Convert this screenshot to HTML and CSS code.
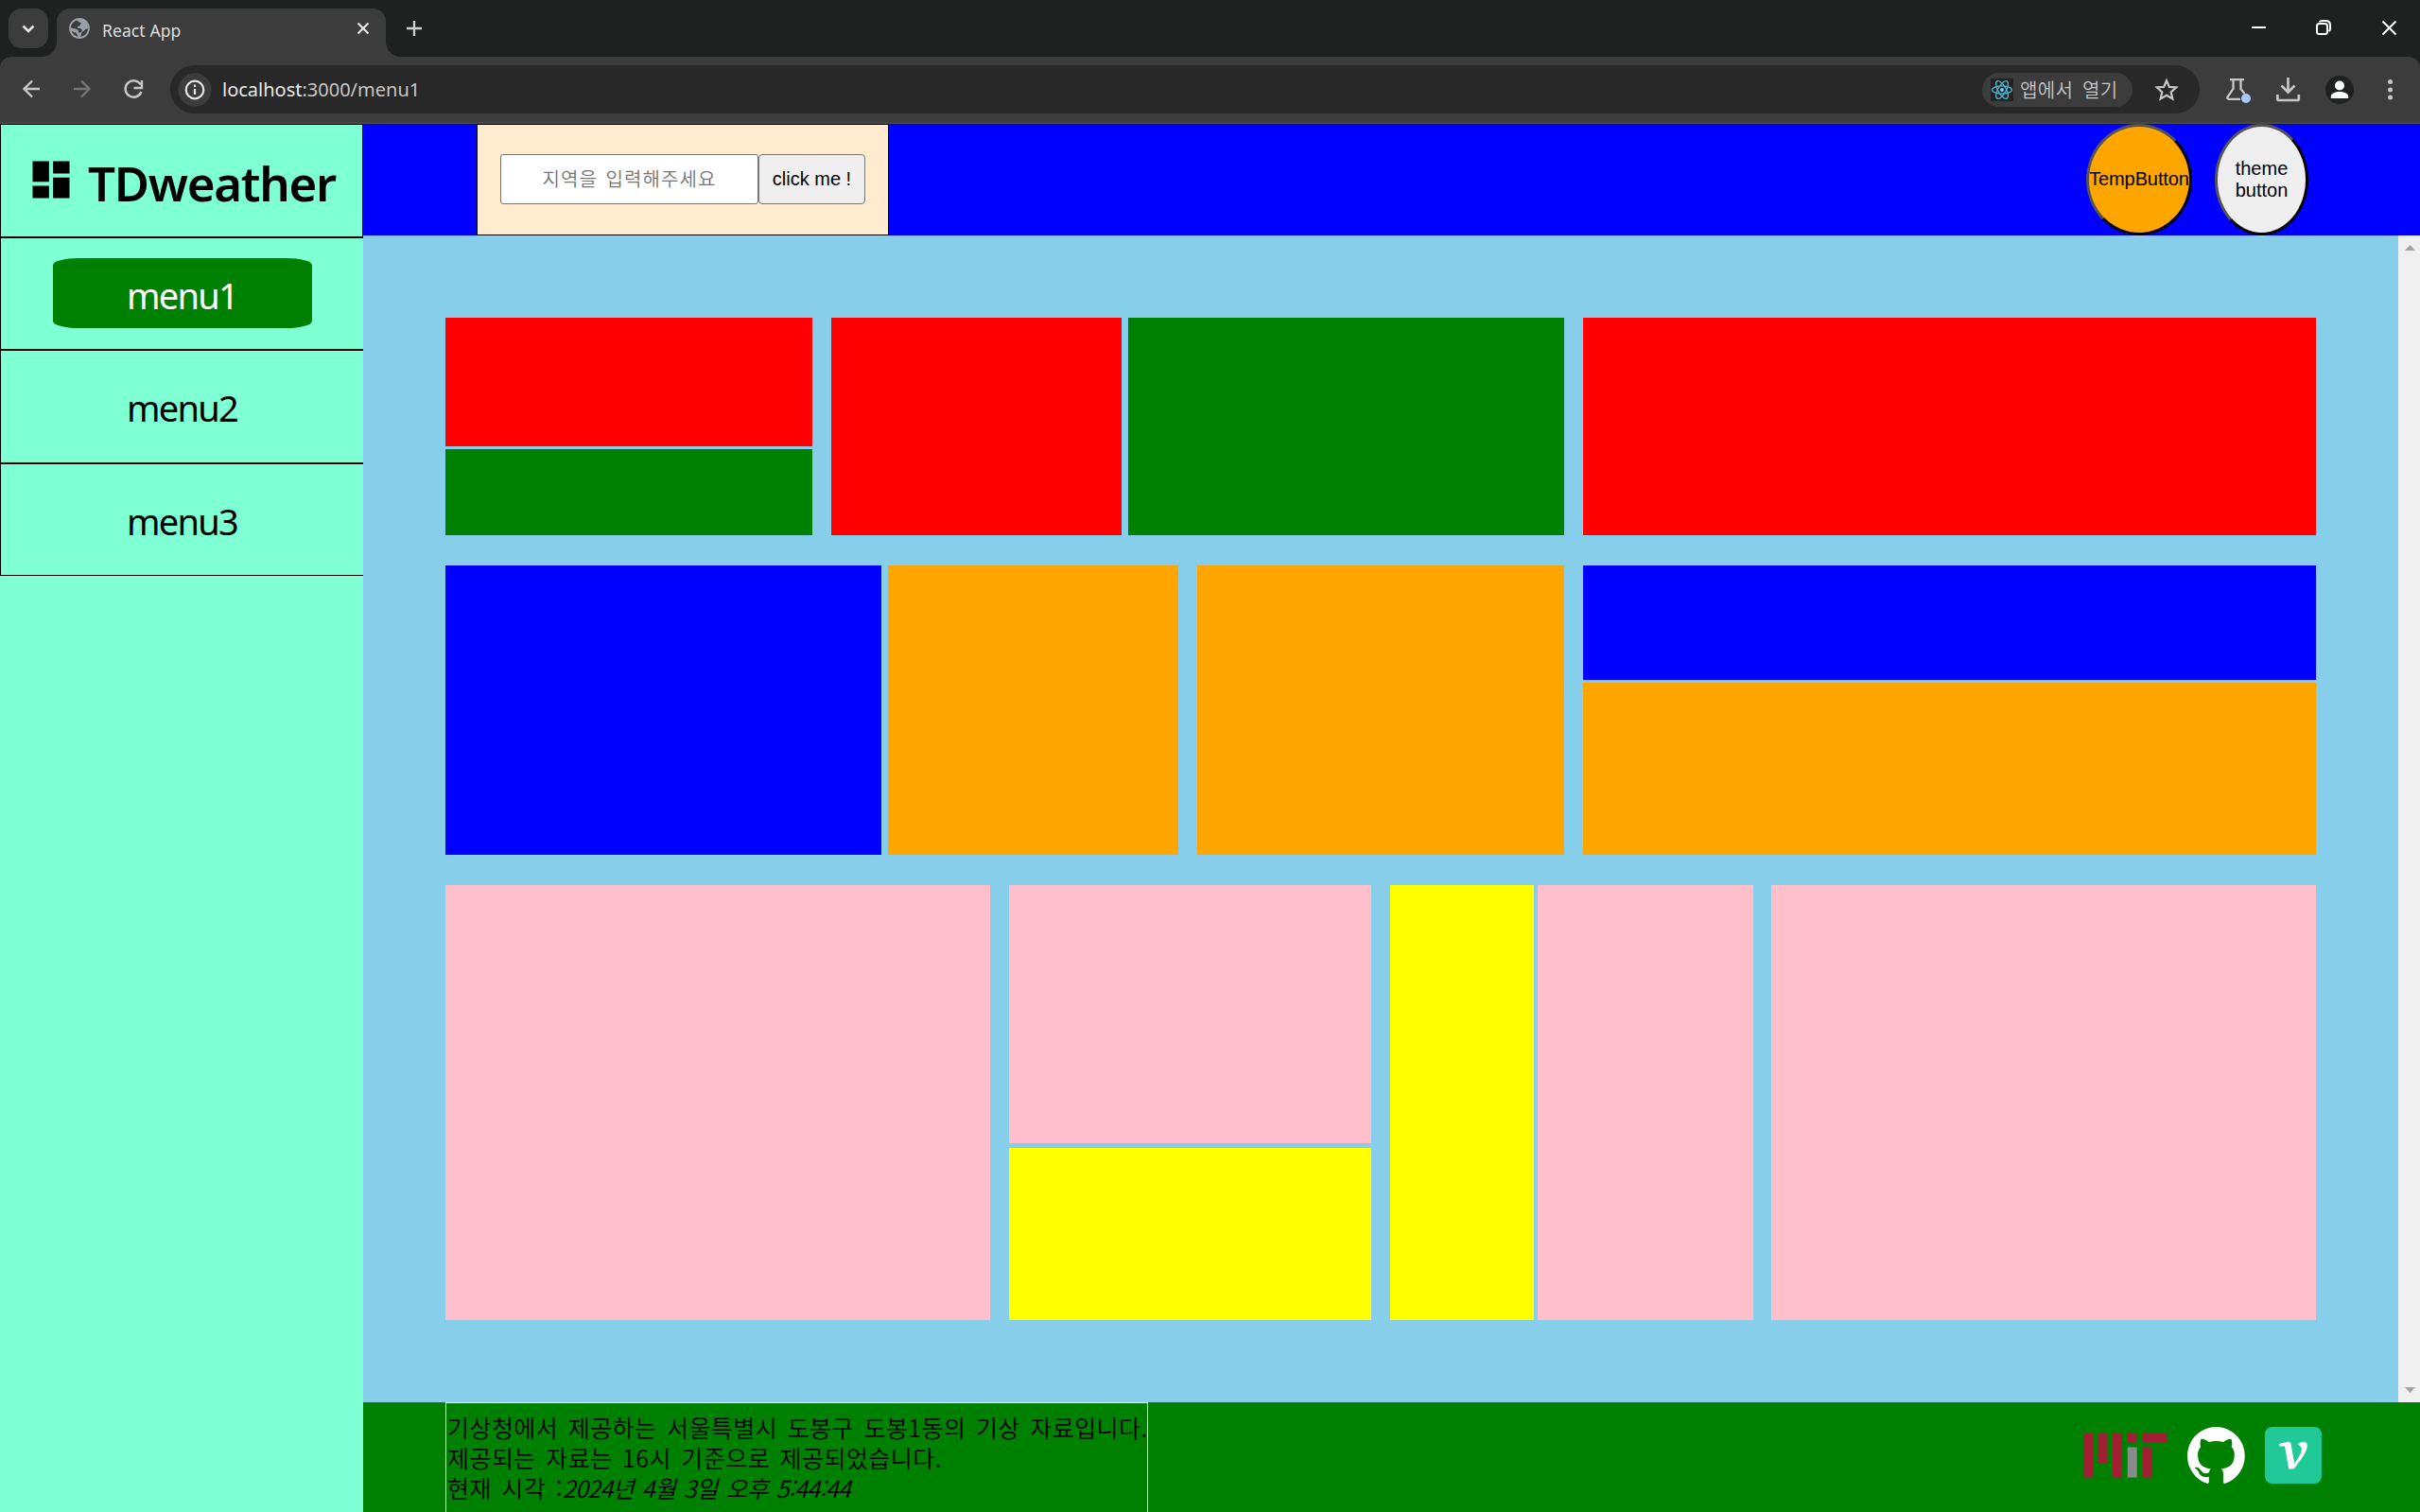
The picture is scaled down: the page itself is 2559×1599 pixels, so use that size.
FILE: index.html
```html
<!DOCTYPE html>
<html lang="ko">
<head>
<meta charset="utf-8">
<title>React App</title>
<link rel="stylesheet" href="styles.css">
</head>
<body>
<div class="window">
  <div class="tabstrip">
    <div class="tab-search">
      <svg width="42" height="42" viewBox="0 0 42 42"><path d="M15.5 18.500l5.500 5.500 5.500-5.500" fill="none" stroke="#e6e6e6" stroke-width="2.600"/></svg>
    </div>
    <div class="tab">
      <svg class="globe" width="22" height="22" viewBox="0 0 22 22"><circle cx="11" cy="11" r="10.900" fill="#9aa0a6"/><path d="M8.300 2.600C4.200 4 2 7.300 2 10.600l5 .9c2 .3 3 1.500 3 3.300v.8c1.600 0 2.600-.4 3.400-1.300.5-.8.300-1.700-.3-2.500-.7-.8-2-1.100-4.100-1.100V8.900c2.300 0 2.600-.7 2.700-1.600.2-1 1-1.600 2-1.600-1.500-.5-3.200-1-5.400-3.100zM20 11c-1.600.2-2.600.7-3.200 1.700-.8 1.400-2.300 1.300-3.200 2.300-.8.900-.3 2.500-1.300 4.900 4.400-.7 7.400-4.300 7.700-8.900zM2.600 13.700c1.200 3 3.300 5.200 6.600 6.100-.3-1.500-.4-2.600-1.500-3.800-.7-1-3-1.300-5.100-2.300z" fill="#3c3c3c"/></svg>
      <span class="tab-title">React App</span>
      <svg class="tab-close" width="14" height="14" viewBox="0 0 14 14"><path d="M1.500 1.500l11 11M12.500 1.500l-11 11" stroke="#e6e6e6" stroke-width="2.200"/></svg>
    </div>
    <svg class="new-tab" width="16" height="16" viewBox="0 0 16 16"><path d="M8 0v16M0 8h16" stroke="#d0d0d0" stroke-width="2.300"/></svg>
    <svg class="controls" width="160" height="24" viewBox="0 0 160 24"><g fill="none" stroke="#fff" stroke-width="2"><path d="M2 11h15"/><rect x="71" y="7" width="11" height="11" rx="2.500"/><path d="M73.500 5.200Q74.500 4 77 4h3.500q4.500 0 4.500 4.500V12q0 2-1.200 3.300"/><path d="M140.500 4.500l14 14M154.500 4.500l-14 14"/></g></svg>
  </div>
  <div class="toolbar-bed">
  <div class="toolbar">
    <svg class="nav" width="180" height="50" viewBox="0 0 180 50"><g fill="none" stroke="#c7c7c7" stroke-width="2.400"><path d="M42 25H26M34 16.500L25.500 25l8.500 8.500"/><path d="M78 25h16M86 16.500l8.500 8.500-8.500 8.500" stroke="#757575"/><path d="M148.800 20.500A8.700 8.700 0 1 0 149.500 28M150 16v8h-8.500"/></g></svg>
    <div class="omnibox">
      <svg class="info" width="36" height="36" viewBox="0 0 36 36"><circle cx="18" cy="18" r="17.700" fill="#3c3c3c"/><circle cx="18" cy="18" r="9.300" fill="none" stroke="#e6e6e6" stroke-width="2.200"/><path d="M18 17v6M18 12.600v2.400" stroke="#e6e6e6" stroke-width="2.200"/></svg>
      <span class="url"><b class="host">localhost</b>:3000/menu1</span>
      <div class="chip">
        <svg width="24" height="24" viewBox="0 0 24 24"><rect width="24" height="24" rx="1" fill="#222"/><g fill="none" stroke="#4fb3cc" stroke-width="1.300"><ellipse cx="12" cy="12" rx="10.500" ry="4.200"/><ellipse cx="12" cy="12" rx="10.500" ry="4.200" transform="rotate(60 12 12)"/><ellipse cx="12" cy="12" rx="10.500" ry="4.200" transform="rotate(120 12 12)"/></g><circle cx="12" cy="12" r="2" fill="#61dafb"/></svg>
        <span class="chip-text">앱에서 열기</span>
      </div>
      <svg class="star" width="26" height="26" viewBox="0 0 26 26"><path d="M13 3.200l2.900 6.700 7.300.6-5.500 4.800 1.600 7.200L13 18.700l-6.300 3.800 1.600-7.200-5.500-4.800 7.300-.6z" fill="none" stroke="#c7c7c7" stroke-width="2.200"/></svg>
    </div>
    <svg class="actions" width="233" height="50" viewBox="0 0 233 50"><g fill="none" stroke="#c7c7c7" stroke-width="2.300"><path d="M32 15.200h15M35.500 15.500V25L29.500 33.500Q28.500 35.600 31 35.800H43M43.500 15.500V25l4 5"/><path d="M93.500 13v14M86.500 21.500l7 7 7-7M82.300 31v4.500q0 1.500 1.500 1.500h19.500q1.500 0 1.500-1.500V31" stroke-width="2.700"/></g><circle cx="49" cy="35" r="5" fill="#a8c7fa"/><circle cx="148" cy="26" r="15" fill="#1f2020"/><circle cx="148" cy="21.500" r="5" fill="#fff"/><path d="M138.800 35v-2c0-3.500 5-5 9.200-5s9.200 1.500 9.200 5v2z" fill="#fff"/><g fill="#c7c7c7"><circle cx="201.500" cy="17.500" r="2.500"/><circle cx="201.500" cy="26" r="2.500"/><circle cx="201.500" cy="34" r="2.500"/></g></svg>
  </div>
  </div>

  <div class="app">
    <nav class="sidebar">
      <div class="brand">
        <svg width="52" height="52" viewBox="0 0 24 24"><path d="M3 13h8V3H3v10zm0 8h8v-6H3v6zm10 0h8V11h-8v10zm0-18v6h8V3h-8z"/></svg>
        <span class="brand-name">TDweather</span>
      </div>
      <div class="menu-item"><span class="menu-link active">menu1</span></div>
      <div class="menu-item tall"><span class="menu-link">menu2</span></div>
      <div class="menu-item"><span class="menu-link">menu3</span></div>
    </nav>
    <div class="page">
      <header class="header">
        <div class="search">
          <div class="search-input">지역을 입력해주세요</div>
          <div class="search-button">click me !</div>
        </div>
        <div class="round temp">TempButton</div>
        <div class="round theme">theme<br>button</div>
      </header>
      <div class="scroller">
        <main class="board">
          <section class="row row1">
            <div class="split v1"><i class="red"></i><i class="green"></i></div>
            <div class="split h1"><i class="red"></i><i class="green"></i></div>
            <i class="red"></i>
          </section>
          <section class="row row2">
            <div class="split h2"><i class="blue"></i><i class="orange"></i></div>
            <i class="orange"></i>
            <div class="split v2"><i class="blue"></i><i class="orange"></i></div>
          </section>
          <section class="row row3">
            <i class="pink"></i>
            <div class="split v3"><i class="pink"></i><i class="yellow"></i></div>
            <div class="split h3"><i class="yellow"></i><i class="pink"></i></div>
            <i class="pink"></i>
          </section>
        </main>
        <div class="scrollbar">
          <svg width="11" height="6" viewBox="0 0 11 6"><path d="M0 6L5.500 0 11 6z" fill="#a3a3a3"/></svg>
          <svg width="11" height="6" viewBox="0 0 11 6"><path d="M0 0h11L5.500 6z" fill="#a3a3a3"/></svg>
        </div>
      </div>
      <footer class="footer">
        <div class="notice">
          <div>기상청에서 제공하는 서울특별시 도봉구 도봉1동의 기상 자료입니다.</div>
          <div>제공되는 자료는 16시 기준으로 제공되었습니다.</div>
          <div>현재 시각 :<em class="clock">2024년 4월 3일 오후 5:44:44</em></div>
        </div>
        <div class="links">
          <svg class="mit" width="89" height="48" viewBox="0 0 89 48"><path d="M0 .5h10v47H0zM15.500.5h10v32h-10zM31 .5h10v47H31zM46.700.5h10v9.500h-10zM63 .5h26v9.500H63zM63 15.500h10v32H63z" fill="#a31f34"/><path d="M46.700 15.500h10v32h-10z" fill="#8a8b8c"/></svg>
          <svg width="61" height="60" viewBox="0 0 98 96"><path fill="#fff" fill-rule="evenodd" d="M48.854 0C21.839 0 0 22 0 49.217c0 21.756 13.993 40.172 33.405 46.690 2.427.490 3.316-1.059 3.316-2.362 0-1.141-.080-5.052-.080-9.127-13.590 2.934-16.420-5.867-16.420-5.867-2.184-5.704-5.420-7.170-5.420-7.170-4.448-3.015.324-3.015.324-3.015 4.934.326 7.523 5.052 7.523 5.052 4.367 7.496 11.404 5.378 14.235 4.074.404-3.178 1.699-5.378 3.074-6.600-10.839-1.141-22.243-5.378-22.243-24.283 0-5.378 1.940-9.778 5.014-13.200-.485-1.222-2.184-6.275.486-13.038 0 0 4.125-1.304 13.426 5.052a46.970 46.970 0 0 1 12.214-1.630c4.125 0 8.330.571 12.213 1.630 9.302-6.356 13.427-5.052 13.427-5.052 2.670 6.763.970 11.816.485 13.038 3.155 3.422 5.015 7.822 5.015 13.200 0 18.905-11.404 23.060-22.324 24.283 1.780 1.548 3.316 4.481 3.316 9.126 0 6.600-.080 11.897-.080 13.526 0 1.304.890 2.853 3.316 2.364 19.412-6.520 33.405-24.935 33.405-46.691C97.707 22 75.788 0 48.854 0z"/></svg>
          <svg width="60" height="60" viewBox="0 0 24 24"><rect width="24" height="24" rx="3" fill="#20c997"/><path fill="#fff" d="M9.883 6.250c.630 0 1.005.300 1.125.900l1.463 8.303c.465-.615.846-1.133 1.146-1.553.465-.660.893-1.418 1.283-2.273.405-.855.608-1.620.608-2.295 0-.405-.113-.727-.338-.967-.210-.255-.608-.577-1.193-.967.600-.765 1.350-1.148 2.250-1.148.480 0 .878.143 1.193.428.330.285.494.704.494 1.260 0 .930-.390 2.093-1.170 3.488-.765 1.380-2.241 3.457-4.431 6.232l-2.227.156-1.711-9.628h-2.250V7.240c.600-.195 1.305-.406 2.115-.630.810-.240 1.358-.360 1.643-.360Z"/></svg>
        </div>
      </footer>
    </div>
  </div>
</div>
</body>
</html>
```

FILE: styles.css
```css
* { box-sizing: border-box; }
body { margin: 0; overflow: hidden; color: #000; font-family: "Noto Sans", "Noto Sans CJK KR", sans-serif; }
svg { display: block; flex: none; }
.window { width: 2559px; height: 1599px; display: flex; flex-direction: column; overflow: hidden; }

/* browser chrome */
.tabstrip { height: 60px; flex: none; background: #1f2120; display: flex; align-items: flex-start; padding: 9px 20px 0 9px; }
.tab-search { width: 42px; height: 42px; border-radius: 14px; background: #3c3c3c; }
.tab { position: relative; width: 348px; height: 51px; margin-left: 9px; border-radius: 14px 14px 0 0; background: #3c3c3c; display: flex; align-items: flex-start; padding: 10px 17px 0 13px; }
.tab::before, .tab::after { content: ""; position: absolute; bottom: 0; width: 15px; height: 15px; }
.tab::before { left: -15px; background: radial-gradient(circle at 0 0, transparent 14.500px, #3c3c3c 15px); }
.tab::after { right: -15px; background: radial-gradient(circle at 100% 0, transparent 14.500px, #3c3c3c 15px); }
.tab-title { margin-left: 13px; font-size: 17.500px; line-height: 27px; letter-spacing: .1px; color: #dedede; white-space: nowrap; }
.tab-close { margin: 4px 0 0 auto; }
.new-tab { margin: 13px 0 0 22px; }
.controls { margin: 9px 0 0 auto; }
.toolbar-bed { flex: none; background: #1f2120; }
.toolbar { height: 71px; background: #3c3c3c; border-bottom: 2px solid #474747; border-radius: 12px 12px 0 0; display: flex; align-items: flex-start; padding-top: 9px; }
.omnibox { flex: 1; height: 51px; border-radius: 26px; background: #282828; display: flex; align-items: center; padding: 0 22px 0 8px; }
.url { margin-left: 11px; font-size: 20px; color: #c7c7c7; white-space: nowrap; }
.host { font-weight: 400; color: #e8e8e8; }
.chip { margin-left: auto; width: 159px; height: 36px; border-radius: 18px; background: #3c3c3c; display: flex; align-items: center; padding-left: 9px; }
.chip-text { margin-left: 7px; font-size: 20px; line-height: 30px; color: #c7c7c7; white-space: nowrap; letter-spacing: .3px; word-spacing: 4px; font-family: "Noto Sans CJK KR", sans-serif; font-weight: 350; }
.star { margin-left: 23px; }

/* app layout */
.app { flex: 1; min-height: 0; display: flex; }
.sidebar { width: 384px; flex: none; background: #7fffd4; }
.brand { height: 120px; border: 1px solid #000; display: flex; align-items: center; padding: 0 0 0 27px; }
.brand svg { margin-top: -3px; }
.brand-name { margin: 4px 0 0 13px; font-size: 51px; line-height: 60px; font-weight: 600; letter-spacing: -1.300px; white-space: nowrap; }
.menu-item { height: 119px; border: solid #000; border-width: 1px 0 1px 1px; display: flex; justify-content: center; padding: 21px 0 0 1px; }
.menu-item.tall { height: 120px; }
.menu-link { width: 274px; height: 74px; text-align: center; font-size: 38px; line-height: 79px; letter-spacing: -1.700px; padding-right: 1px; }
.menu-link.active { background: #008000; color: #fff; border-radius: 10%; }
.page { flex: 1; min-width: 0; display: flex; flex-direction: column; }
.header { height: 118px; flex: none; background: #00f; display: flex; padding: 0 118px 0 120px; }
.search { width: 436px; margin-right: auto; border: 1px solid #000; background: #ffebcd; display: flex; align-items: flex-start; padding: 31px 24px; }
.search-input { width: 273px; height: 53px; border: 1px solid #767676; border-radius: 3px; background: #fff; color: #757575; text-align: center; font: 350 20px/49px "Noto Sans CJK KR", sans-serif; letter-spacing: 1.100px; word-spacing: 2px; }
.search-button { width: 113px; height: 53px; border: 1px solid #767676; border-radius: 4px; background: #efefef; text-align: center; font: 20px/51px "Liberation Sans", sans-serif; }
.round { height: 118px; border: 3px outset #000; border-radius: 50%; display: flex; align-items: center; justify-content: center; text-align: center; font: 20px/23px "Liberation Sans", sans-serif; }
.temp { width: 112px; margin-right: 24px; padding-bottom: 2px; letter-spacing: -.1px; background: #ffa500; }
.theme { width: 99px; background: #efefef; }

/* board */
.scroller { flex: 1; min-height: 0; display: flex; background: #87ceeb; }
.board { flex: 1; padding: 87px 87px 0; display: flex; flex-direction: column; gap: 32px; }
.scrollbar { width: 23px; background: #f0f0f0; display: flex; flex-direction: column; align-items: center; justify-content: space-between; padding: 10px 0 10px 1px; }
.row { display: grid; }
.row1 { height: 230px; grid-template-columns: 388px 775px 775px; gap: 20px; }
.row2 { height: 306px; grid-template-columns: 775px 388px 775px; gap: 20px; }
.row3 { height: 460px; grid-template-columns: 576px 20px 383px 20px 384px 19px 576px; }
.row3 > :nth-child(2) { grid-column: 3; }
.row3 > :nth-child(3) { grid-column: 5; }
.row3 > :nth-child(4) { grid-column: 7; }
.split { display: grid; }
.v1 { grid-template-rows: 136px 91px; gap: 3px; }
.v2 { grid-template-rows: 121px 182px; gap: 3px; }
.v3 { grid-template-rows: 273px 182px; gap: 5px; }
.h1 { grid-template-columns: 307px 461px; gap: 7px; }
.h2 { grid-template-columns: 461px 307px; gap: 7px; }
.h3 { grid-template-columns: 152px 228px; gap: 4px; }
.red { background: red; }
.green { background: green; }
.blue { background: blue; }
.orange { background: orange; }
.pink { background: pink; }
.yellow { background: yellow; }

/* footer */
.footer { height: 116px; flex: none; background: green; display: flex; padding: 0 104px 0 87px; }
.notice { width: 743px; border: solid #fff; border-width: 1px 1px 0; padding: 9px 0 0 1px; font: 350 25px/32px "Noto Sans CJK KR", sans-serif; letter-spacing: .450px; word-spacing: 3px; white-space: nowrap; }
.clock { letter-spacing: -.500px; word-spacing: 2px; }
.links { margin-left: auto; display: flex; align-items: center; gap: 21px; height: 112px; }
```
